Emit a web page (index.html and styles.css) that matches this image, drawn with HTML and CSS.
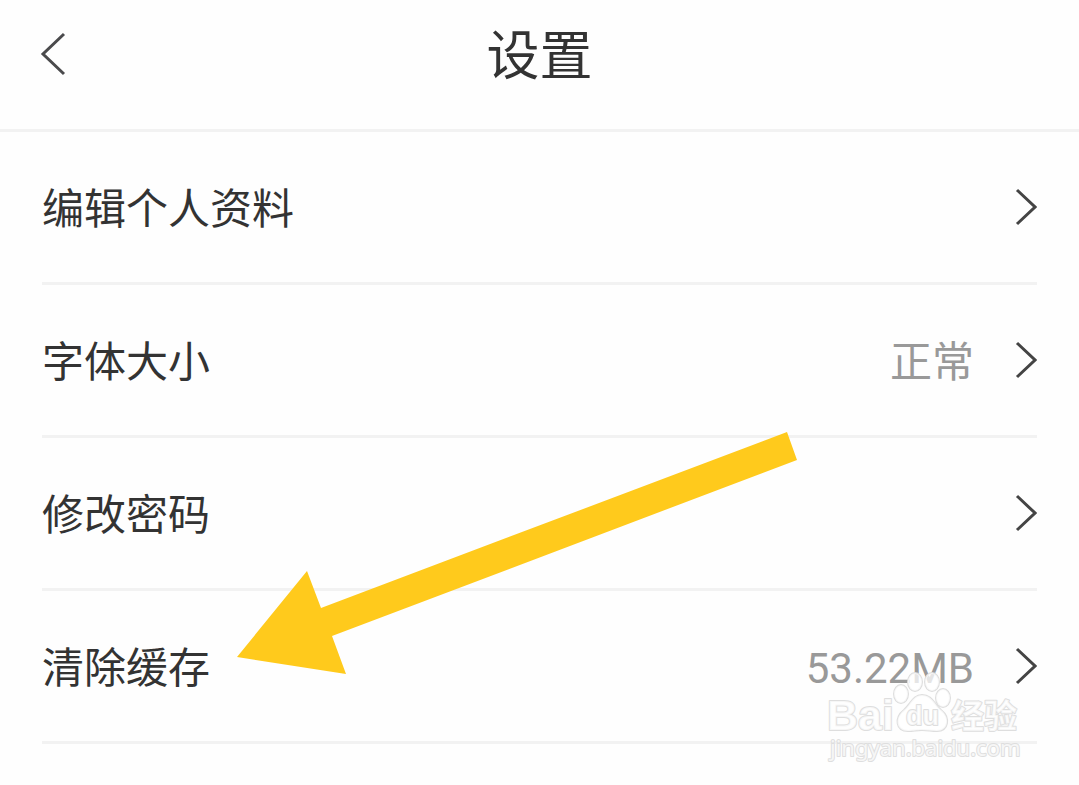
FILE: index.html
```html
<!DOCTYPE html>
<html lang="zh-CN">
<head>
  <meta charset="UTF-8">
  <meta name="viewport" content="width=device-width, initial-scale=1">
  <title>设置</title>
  <link rel="stylesheet" href="styles.css">
</head>
<body>
  <header class="navbar">
    <button class="back-button" type="button" aria-label="返回">
      <svg width="26" height="44" viewBox="0 0 26 44"><path d="M24 2L3 22L24 42"/></svg>
    </button>
    <h1>设置</h1>
  </header>

  <main class="settings">
    <nav class="list">
      <a class="item" href="#profile">
        <span class="label">编辑个人资料</span>
        <svg class="chevron" width="22" height="38" viewBox="0 0 22 38"><path d="M2 2L20 19L2 36"/></svg>
      </a>
      <a class="item" href="#font">
        <span class="label">字体大小</span>
        <span class="value">正常</span>
        <svg class="chevron" width="22" height="38" viewBox="0 0 22 38"><path d="M2 2L20 19L2 36"/></svg>
      </a>
      <a class="item" href="#password">
        <span class="label">修改密码</span>
        <svg class="chevron" width="22" height="38" viewBox="0 0 22 38"><path d="M2 2L20 19L2 36"/></svg>
      </a>
      <a class="item" href="#cache">
        <span class="label">清除缓存</span>
        <span class="value">53.22MB</span>
        <svg class="chevron" width="22" height="38" viewBox="0 0 22 38"><path d="M2 2L20 19L2 36"/></svg>
      </a>
    </nav>

    <!-- 指向“清除缓存”的箭头 -->
    <svg class="pointer" width="562" height="246" viewBox="0 0 562 246">
      <path d="M0 227L70 141L84 178L550 2L560 30L95 206L109 244Z"/>
    </svg>

    <!-- 水印 -->
    <svg class="watermark" width="200" height="96" viewBox="0 0 200 96">
      <ellipse cx="79" cy="23" rx="7" ry="9"/>
      <ellipse cx="93" cy="11" rx="7" ry="9"/>
      <ellipse cx="110" cy="11" rx="7" ry="9"/>
      <ellipse cx="121" cy="27" rx="7" ry="9"/>
      <path d="M100 24C110 24 112 33 119 39C129 47 126 60 115 60C109 60 106 59 100 59C94 59 92 60 86 60C74 60 72 47 82 39C89 33 91 24 100 24Z"/>
      <text class="mark-brand" x="5" y="59">Bai</text>
      <text class="mark-du" x="84" y="54">du</text>
      <text class="mark-name" x="129" y="57">经验</text>
      <text class="mark-url" x="8" y="85">jingyan.baidu.com</text>
    </svg>
  </main>
</body>
</html>
```
FILE: styles.css
```css
body {
  min-height: 100vh;
  margin: 0;
  background-color: #fefefe;
  color: #333;
  font-family: Roboto, "Noto Sans CJK SC", sans-serif;
}

.navbar {
  display: grid;
  grid-template-columns: 1fr auto 1fr;
  align-items: center;
  padding: 14px 40px 35px;
  border-bottom: 3px solid #f2f2f2;
}

.navbar h1 {
  margin: 0;
  padding-top: 6px;
  font-size: 53px;
  line-height: 74px;
  font-weight: 400;
}

.back-button {
  display: flex;
  justify-self: start;
  padding: 0;
  border: none;
  background: none;
  cursor: pointer;
}

.back-button svg {
  fill: none;
  stroke: #4a4a4c;
  stroke-width: 3;
}

.settings {
  position: relative;
}

.list {
  padding: 0 42px;
}

.item {
  display: flex;
  align-items: center;
  height: 150px;
  border-bottom: 3px solid #f2f2f2;
  color: #333;
  font-size: 42px;
  line-height: 60px;
  text-decoration: none;
}

.label {
  flex: 1;
  padding-top: 6px;
}

.value {
  margin-right: 41px;
  padding-top: 6px;
  color: #999;
}

.chevron {
  fill: none;
  stroke: #444;
  stroke-width: 3;
}

.pointer {
  position: absolute;
  top: 298px;
  left: 237px;
  fill: #ffca1c;
  pointer-events: none;
}

.watermark {
  position: absolute;
  top: 539px;
  right: 57px;
  fill: rgba(255, 255, 255, 0.75);
  stroke: #dedede;
  stroke-width: 2;
  stroke-linejoin: round;
  paint-order: stroke;
  pointer-events: none;
}

.mark-brand {
  font: bold 43px "Liberation Sans", sans-serif;
}

.mark-du {
  font: bold 27px "Liberation Sans", sans-serif;
}

.mark-name {
  font: bold 33px "Noto Sans CJK SC", sans-serif;
}

.mark-url {
  font: 22px "Noto Sans", sans-serif;
}
```
